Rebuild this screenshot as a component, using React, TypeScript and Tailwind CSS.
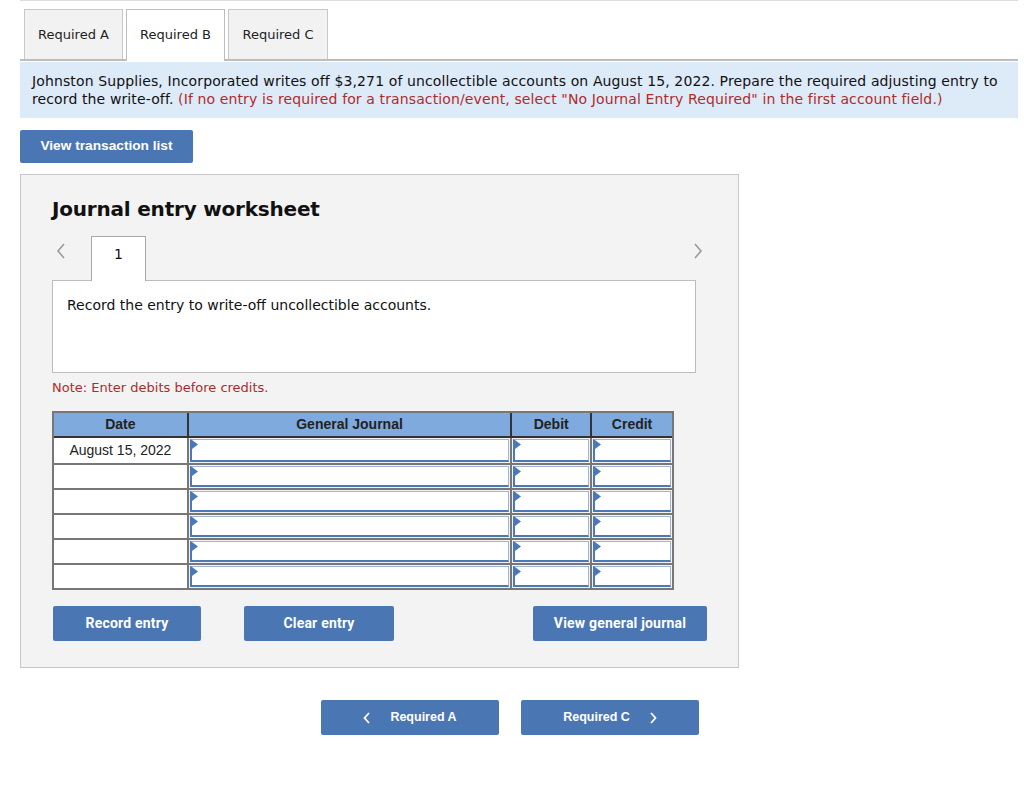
import React from "react";

const verdana = { fontFamily: '"DejaVu Sans", Verdana, sans-serif' };

function Tri() {
  return (
    <svg className="absolute left-0 top-0" width="6" height="9" viewBox="0 0 6 9">
      <polygon points="0,0 6,4.5 0,9" fill="#4a78b8" />
    </svg>
  );
}

function InCell({ w, last }: { w: string; last?: boolean }) {
  return (
    <div className={`${w} h-full ${last ? "" : "border-r-2 border-[#777]"} bg-[#f3f3f3] p-px`}>
      <div className="relative h-full bg-white border border-[#9fb4d4] border-l-2 border-l-[#4a78b8] border-b-2 border-b-[#4a78b8]">
        <Tri />
      </div>
    </div>
  );
}

function Row({ date, first }: { date?: string; first?: boolean }) {
  return (
    <div className={`flex h-[25px] ${first ? "" : "border-t-2 border-[#777]"}`}>
      <div className="w-[135px] h-full border-r-2 border-[#777] bg-white flex items-center justify-center text-[14px] text-[#222] [font-family:'Liberation_Sans',Arial,sans-serif]">
        {date}
      </div>
      <InCell w="w-[324px]" />
      <InCell w="w-[80px]" />
      <InCell w="w-[80px]" last />
    </div>
  );
}

function Chev({ dir }: { dir: "l" | "r" }) {
  return (
    <svg width="10" height="16" viewBox="0 0 10 16">
      <polyline
        points={dir === "l" ? "8,1 2,8 8,15" : "2,1 8,8 2,15"}
        fill="none"
        stroke="#9a9a9a"
        strokeWidth="1.6"
      />
    </svg>
  );
}

export default function App() {
  return (
    <div className="w-[1024px] h-[787px] bg-white relative" style={verdana}>
      <div className="ml-[20px] w-[998px] h-px bg-[#dedede]" />
      {/* tabs */}
      <div className="ml-[20px] w-[998px] flex items-end border-b-2 border-[#bdbdbd] pl-[4px] gap-[3px] h-[60px]">
        <div className="w-[99px] h-[50px] bg-[#f2f2f2] border border-[#c8c8c8] border-b-0 flex items-center justify-center text-[13px] text-[#222]">
          Required A
        </div>
        <div className="w-[99px] h-[52px] bg-white border border-[#bdbdbd] border-b-0 flex items-center justify-center text-[13px] text-[#222] mb-[-2px] pb-[2px] relative z-10">
          Required B
        </div>
        <div className="w-[100px] h-[50px] bg-[#f2f2f2] border border-[#c8c8c8] border-b-0 flex items-center justify-center text-[13px] text-[#222]">
          Required C
        </div>
      </div>
      {/* instruction */}
      <div className="ml-[20px] mt-px w-[998px] h-[56px] bg-[#ddeaf8] px-[12px] pt-[10px] text-[14px] leading-[18px] text-[#111] tracking-[0.12px]">
        Johnston Supplies, Incorporated writes off $3,271 of uncollectible accounts on August 15, 2022. Prepare the required adjusting entry to record the write-off.{" "}
        <span className="text-[#b02a2a]">
          (If no entry is required for a transaction/event, select "No Journal Entry Required" in the first account field.)
        </span>
      </div>
      <div className="ml-[20px] mt-[12px] w-[173px] h-[33px] bg-[#4a76b4] rounded-[2px] flex items-center justify-center text-white text-[13.7px] font-bold [font-family:'Liberation_Sans',Arial,sans-serif]">
        View transaction list
      </div>
      {/* worksheet */}
      <div className="ml-[20px] mt-[11px] w-[719px] h-[494px] bg-[#f3f3f3] border border-[#c8c8c8] pl-[31px] pt-[21px]">
        <div className="text-[20px] font-bold text-[#111] leading-[26px] tracking-[-0.2px]">Journal entry worksheet</div>
        <div className="flex items-end mt-[13px] h-[45px] w-[643px] relative">
          <div className="w-[39px] h-full flex items-center pl-[4px] pb-[14px]">
            <Chev dir="l" />
          </div>
          <div className="w-[55px] h-[45px] bg-white border border-[#a8a8a8] border-b-0 flex items-center justify-center text-[14px] text-[#111] mb-[-1px] relative z-10 pb-[10px]">
            1
          </div>
          <div className="flex-1 h-full flex items-center justify-end pb-[14px]">
            <div className="mr-[-8px]">
              <Chev dir="r" />
            </div>
          </div>
        </div>
        <div className="w-[644px] h-[93px] bg-white border border-[#bcbcbc] pl-[14px] pt-[14px] text-[14px] text-[#111]">
          Record the entry to write-off uncollectible accounts.
        </div>
        <div className="mt-[7px] text-[13px] text-[#b02a2a] leading-[16px]">Note: Enter debits before credits.</div>
        {/* table */}
        <div className="mt-[15px] w-[622px] border-2 border-[#777]">
          <div className="flex h-[25px] bg-[#7faade] border-b-2 border-[#333] text-[14px] font-bold text-[#222] [font-family:'Liberation_Sans',Arial,sans-serif]">
            <div className="w-[135px] border-r-2 border-[#333] flex items-center justify-center">Date</div>
            <div className="w-[324px] border-r-2 border-[#333] flex items-center justify-center">General Journal</div>
            <div className="w-[80px] border-r-2 border-[#333] flex items-center justify-center">Debit</div>
            <div className="w-[80px] flex items-center justify-center">Credit</div>
          </div>
          <Row date="August 15, 2022" first />
          <Row />
          <Row />
          <Row />
          <Row />
          <Row />
        </div>
        <div className="flex mt-[16px] text-white text-[14px] font-bold tracking-[0.2px] [font-family:Roboto,sans-serif]">
          <div className="ml-[1px] w-[148px] h-[35px] bg-[#4a76b4] rounded-[2px] flex items-center justify-center">Record entry</div>
          <div className="ml-[43px] w-[150px] h-[35px] bg-[#4a76b4] rounded-[2px] flex items-center justify-center">Clear entry</div>
          <div className="ml-[139px] w-[174px] h-[35px] bg-[#4a76b4] rounded-[2px] flex items-center justify-center">View general journal</div>
        </div>
      </div>
      {/* bottom nav */}
      <div className="flex ml-[321px] mt-[32px] gap-[22px] text-white text-[12.5px] font-bold [font-family:'Liberation_Sans',Arial,sans-serif]">
        <div className="w-[178px] h-[35px] bg-[#4a76b4] rounded-[2px] flex items-center justify-center gap-[19px]">
          <svg width="8" height="12" viewBox="0 0 8 12"><polyline points="6,1 1.5,6 6,11" fill="none" stroke="white" strokeWidth="1.8" /></svg>
          <span>Required A</span>
        </div>
        <div className="w-[178px] h-[35px] bg-[#4a76b4] rounded-[2px] flex items-center justify-center gap-[19px]">
          <span>Required C</span>
          <svg width="8" height="12" viewBox="0 0 8 12"><polyline points="2,1 6.5,6 2,11" fill="none" stroke="white" strokeWidth="1.8" /></svg>
        </div>
      </div>
    </div>
  );
}
